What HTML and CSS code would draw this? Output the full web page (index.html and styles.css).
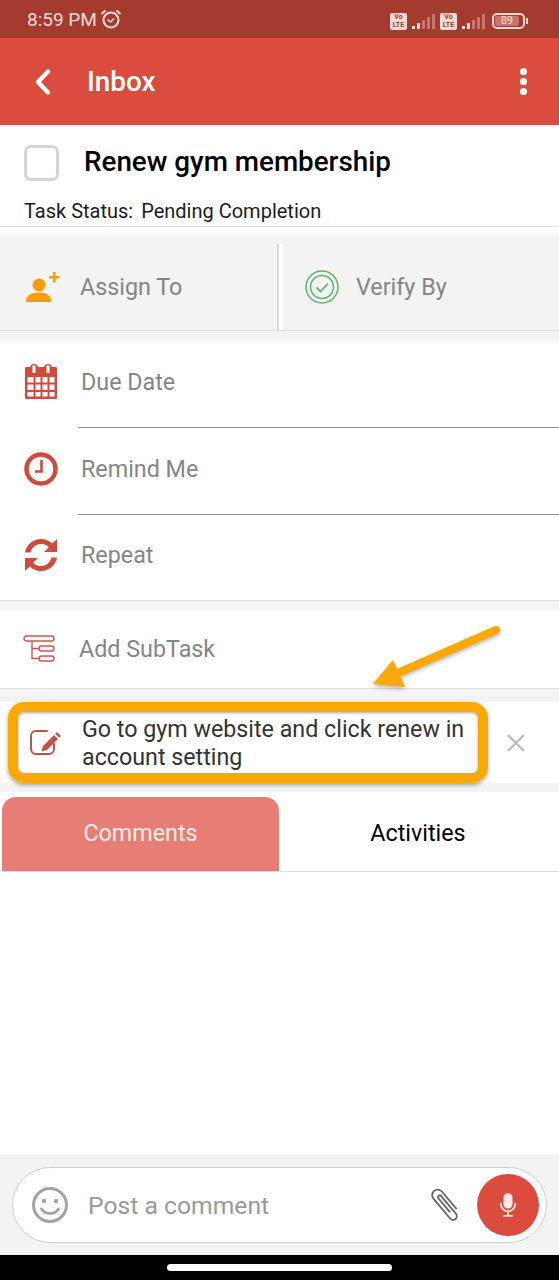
FILE: index.html
```html
<!DOCTYPE html>
<html lang="en">
<head>
  <meta charset="UTF-8" />
  <meta name="viewport" content="width=device-width, initial-scale=1.0"/>
  <title>Inbox - Renew gym membership</title>
  <link rel="stylesheet" href="styles.css">
</head>
<body>

<div class="status-bar">
  <div class="status-left">
    <span class="clock">8:59 PM</span>
    <svg class="alarm" width="22" height="20" viewBox="0 0 22 20" fill="none" stroke="#f6dcd6" stroke-width="2">
      <circle cx="11" cy="11" r="7.5"/>
      <path d="M7.5 10.5l3 2.5 3.5-3.5" stroke-width="1.6"/>
      <path d="M1.5 5L5.5 1.5M20.5 5L16.5 1.5"/>
    </svg>
  </div>
  <div class="status-right">
    <span class="volte">Vo<br>LTE</span>
    <span class="signal"><i class="on s1"></i><i class="on s2"></i><i class="s3"></i><i class="s4"></i><i class="s5"></i></span>
    <span class="volte">Vo<br>LTE</span>
    <span class="signal"><i class="on s1"></i><i class="on s2"></i><i class="s3"></i><i class="s4"></i><i class="s5"></i></span>
    <span class="battery"><span class="battery-level">89</span></span>
    <span class="battery-tip"></span>
  </div>
</div>

<header class="app-bar">
  <svg class="back" width="20" height="28" viewBox="0 0 20 28" fill="none" stroke="#fff" stroke-width="4.4" stroke-linecap="round" stroke-linejoin="round">
    <path d="M15 3.5L5 14l10 10.5"/>
  </svg>
  <span class="app-title">Inbox</span>
  <span class="more"><i></i><i></i><i></i></span>
</header>

<section class="task-head">
  <div class="task-title-row">
    <span class="checkbox"></span>
    <h1>Renew gym membership</h1>
  </div>
  <p class="task-status"><span>Task Status:</span><span>Pending Completion</span></p>
</section>

<section class="assign-row">
  <div class="assign-cell first">
    <svg width="36" height="34" viewBox="0 0 36 34" fill="#fb9a0b">
      <circle cx="14" cy="15" r="6.5"/>
      <path d="M1 32c0-6 4-9.500 13-9.500S26 26 26 32z"/>
      <path d="M24 6h4V2h2.500v4h4v2.500h-4v4H28v-4h-4z"/>
    </svg>
    <span>Assign To</span>
  </div>
  <div class="assign-cell second">
    <svg width="34" height="34" viewBox="0 0 34 34" fill="none" stroke="#5db56c" stroke-width="1.500">
      <circle cx="17" cy="17" r="16"/>
      <circle cx="17" cy="17" r="11.500"/>
      <path d="M11.500 17.500l4 4 7.500-8" stroke-width="1.800"/>
    </svg>
    <span>Verify By</span>
  </div>
</section>

<section class="dates">
  <div class="date-row">
    <svg class="date-icon" width="36" height="36" viewBox="0 0 36 36">
      <path fill="#d04a3d" d="M3 3h30a1 1 0 0 1 1 1v30a1 1 0 0 1-1 1H3a1 1 0 0 1-1-1V4a1 1 0 0 1 1-1z"/>
      <path fill="#d04a3d" d="M7 6V4a4 4 0 0 1 8 0v2zM21 6V4a4 4 0 0 1 8 0v2z"/>
      <path fill="#fff" d="M9.500 1.500h3V9h-3zM23.500 1.500h3V9h-3z"/>
      <path fill="#fff" d="M4.500 13h6v5.500h-6zM12.500 13h5v5.500h-5zM19.500 13h5v5.500h-5zM26.500 13h5v5.500h-5zM4.500 20.500h6V26h-6zM12.500 20.500h5V26h-5zM19.500 20.500h5V26h-5zM26.500 20.500h5V26h-5zM4.500 28h6v4.500h-6zM12.500 28h5v4.500h-5zM19.500 28h5v4.500h-5zM26.500 28h5v4.500h-5z"/>
    </svg>
    <span>Due Date</span>
  </div>
  <div class="date-row">
    <svg class="date-icon" width="36" height="36" viewBox="0 0 36 36" fill="none" stroke="#d04a3d">
      <circle cx="18" cy="18" r="14.500" stroke-width="4.500"/>
      <path d="M18.500 9v11.500H12" stroke-width="2.600"/>
    </svg>
    <span>Remind Me</span>
  </div>
  <div class="date-row last">
    <svg class="date-icon" width="36" height="36" viewBox="0 0 36 36" fill="#d04a3d">
      <path d="M2 15.500C3.500 7.500 10 2 18 2c4.500 0 8.300 1.700 11.200 4.500L34 2v13H21l4.800-4.800C23.700 8.100 21 7 18 7c-5 0-9.200 3.500-10.400 8.500z"/>
      <path d="M34 20.500C32.500 28.500 26 34 18 34c-4.500 0-8.300-1.700-11.200-4.500L2 34V21h13l-4.800 4.800c2.100 2.100 4.800 3.200 7.800 3.200 5 0 9.200-3.500 10.400-8.500z"/>
    </svg>
    <span>Repeat</span>
  </div>
</section>

<section class="subtask">
  <svg width="34" height="28" viewBox="0 0 34 28" fill="none" stroke="#c9574c" stroke-width="1.400">
    <rect x="1" y="1" width="30" height="5" rx="2.500"/>
    <rect x="16" y="11" width="15" height="5" rx="2.500"/>
    <rect x="16" y="21" width="15" height="5" rx="2.500"/>
    <path d="M9 6v17.500h7M9 13.500h7"/>
  </svg>
  <span>Add SubTask</span>
</section>

<section class="note">
  <svg class="note-icon" width="34" height="30" viewBox="0 0 34 30" fill="none" stroke="#c0524a" stroke-width="2">
    <path d="M17 3H6a5 5 0 0 0-5 5v13a5 5 0 0 0 5 5h13a5 5 0 0 0 5-5v-5" stroke-linecap="round"/>
    <path fill="#c0524a" stroke="none" d="M27 4l4 4-1.800 1.800-4-4zM24 7l4 4-11 11-5.500 1.500L13 18z"/>
  </svg>
  <p class="note-text">Go to gym website and click renew in account setting</p>
  <svg class="note-close" width="20" height="20" viewBox="0 0 20 20" stroke="#bdbdbd" stroke-width="2.400">
    <path d="M2 2l16 16M18 2L2 18"/>
  </svg>
  <div class="note-highlight"></div>
</section>

<svg class="callout-arrow" width="134" height="68" viewBox="0 0 134 68">
  <path d="M124 8L26 51" stroke="#f9a806" stroke-width="8" stroke-linecap="round" fill="none"/>
  <path d="M1 62L21 38 33 65z" fill="#f9a806"/>
</svg>

<nav class="tabs">
  <div class="tab active">Comments</div>
  <div class="tab">Activities</div>
</nav>

<div class="comment-area"></div>

<footer class="composer-wrap">
  <div class="composer">
    <svg width="38" height="38" viewBox="0 0 38 38" fill="none" stroke="#a3a3a3" stroke-width="3">
      <circle cx="19" cy="19" r="16.500"/>
      <circle cx="13" cy="15" r="2.200" fill="#a3a3a3" stroke="none"/>
      <circle cx="25" cy="15" r="2.200" fill="#a3a3a3" stroke="none"/>
      <path d="M10.500 23c2 3 5 4.500 8.500 4.500s6.500-1.500 8.500-4.500" stroke-linecap="round"/>
    </svg>
    <span class="composer-hint">Post a comment</span>
    <svg class="clip" width="32" height="34" viewBox="-16 -17 32 34" fill="none" stroke="#666" stroke-width="1.800">
      <path transform="rotate(-40)" d="M-1.500 8V-10a1.750 1.750 0 0 1 3.500 0V13a3.750 3.750 0 0 1-7.500 0V-13a5.500 5.500 0 0 1 11 0V10"/>
    </svg>
    <span class="mic">
      <svg width="18" height="26" viewBox="0 0 20 28" fill="none" stroke="#fbe9e6" stroke-width="2">
        <rect x="5" y="1" width="10" height="17" rx="5" fill="#fbe9e6" stroke="none"/>
        <path d="M2 12v1a8 8 0 0 0 16 0v-1M10 21v4.500M4.500 26h11"/>
      </svg>
    </span>
  </div>
</footer>

<div class="nav-bar"><span class="home-pill"></span></div>

</body>
</html>
```

FILE: styles.css
```css
* {
  box-sizing: border-box;
}

body {
  margin: 0;
  width: 559px;
  height: 1280px;
  position: relative;
  overflow: hidden;
  font-family: Roboto, Arial, sans-serif;
  background: #f3f3f3;
}

.status-bar {
  height: 38px;
  background: #a53a2f;
  display: flex;
  justify-content: space-between;
  align-items: center;
  padding: 0 31px 0 27px;
  color: #f6dcd6;
}

.status-left {
  display: flex;
  align-items: center;
  gap: 3px;
}

.clock {
  font-size: 19px;
}

.status-right {
  display: flex;
  align-items: center;
  gap: 5px;
  padding-top: 4px;
}

.volte {
  width: 17px;
  height: 17px;
  border-radius: 2px;
  background: #f2d8d2;
  color: #a53a2f;
  font-size: 7px;
  font-weight: 700;
  line-height: 8px;
  text-align: center;
}

.signal {
  display: flex;
  align-items: flex-end;
  gap: 2px;
  height: 16px;
}

.signal i {
  width: 3px;
  background: #c9776c;
}

.signal .on {
  background: #f6dcd6;
}

.s1 { height: 3px; }
.s2 { height: 6px; }
.s3 { height: 9px; }
.s4 { height: 12px; }
.s5 { height: 15px; }

.battery {
  width: 33px;
  height: 16px;
  margin-left: 2px;
  border: 2px solid #f2d8d2;
  border-radius: 5px;
  padding: 1px;
  display: flex;
}

.battery-level {
  width: 88%;
  background: #c9776c;
  border-radius: 2px;
  font-size: 11px;
  line-height: 10px;
  text-align: center;
  color: #f6dcd6;
}

.battery-tip {
  width: 2px;
  height: 6px;
  margin-left: -4px;
  background: #f2d8d2;
}

.app-bar {
  height: 87px;
  background: #db4b3e;
  display: flex;
  align-items: center;
  padding: 0 32px 0 33px;
  color: #fff;
}

.app-title {
  margin-left: 34px;
  font-size: 27.800px;
  font-weight: 500;
}

.more {
  margin-left: auto;
  display: flex;
  flex-direction: column;
  gap: 3px;
}

.more i {
  width: 7px;
  height: 7px;
  border-radius: 50%;
  background: #fff;
}

.task-head {
  height: 102px;
  background: #fff;
  border-bottom: 1px solid #ddd;
  padding: 20px 0 0 24px;
}

.task-title-row {
  display: flex;
  align-items: center;
  height: 36px;
}

.checkbox {
  width: 35px;
  height: 36px;
  border: 3px solid #d4d4d4;
  border-radius: 7px;
}

.task-title-row h1 {
  margin: -3px 0 0 25px;
  font-size: 27.800px;
  font-weight: 500;
  color: #000;
}

.task-status {
  margin: 18px 0 0;
  font-size: 20px;
  color: #1c1c1c;
  display: flex;
  gap: 8px;
}

.assign-row {
  height: 104px;
  border-top: 8px solid #fff;
  background: #f3f3f3;
  border-bottom: 1px solid #ddd;
  display: flex;
}

.assign-cell {
  display: flex;
  align-items: center;
  font-size: 23.300px;
  color: #858585;
}

.assign-cell.first {
  width: 283px;
  padding: 0 0 0 25px;
  gap: 19px;
  margin-top: 9px;
  border-right: 4px solid #fff;
  box-shadow: inset -2px 0 0 #d9d9d9;
}

.assign-cell.second {
  padding-left: 22px;
  gap: 17px;
  padding-top: 9px;
}

.dates {
  margin-top: 10px;
  background: #fff;
  border-bottom: 1px solid #ddd;
}

.date-row {
  position: relative;
  height: 87px;
  display: flex;
  align-items: center;
  padding: 0 0 5px 23px;
  font-size: 23.300px;
  color: #858585;
}

.date-row::after {
  content: "";
  position: absolute;
  left: 78px;
  right: 0;
  bottom: 0;
  height: 1px;
  background: #909090;
}

.date-row.last {
  height: 85px;
}

.date-row.last::after {
  display: none;
}

.date-icon {
  width: 36px;
  margin-right: 22px;
}

.subtask {
  margin-top: 9px;
  height: 79px;
  background: #fff;
  border-bottom: 1px solid #ddd;
  display: flex;
  align-items: center;
  padding-left: 23px;
  gap: 22px;
  font-size: 23.300px;
  color: #858585;
}

.note {
  position: relative;
  margin-top: 13px;
  height: 81px;
  background: #fff;
  display: flex;
  align-items: center;
  padding-left: 30px;
}

.note-icon {
  flex: none;
}

.note-text {
  margin: 0 0 0 18px;
  width: 395px;
  font-size: 23.250px;
  line-height: 28px;
  color: #333;
}

.note-close {
  margin-left: 29px;
  flex: none;
}

/* orange annotation drawn on the screenshot */
.note-highlight {
  position: absolute;
  left: 8px;
  top: 0;
  width: 480px;
  height: 81px;
  border: 10px solid #f9a806;
  border-radius: 16px;
  box-shadow: 0 2px 4px rgba(0,0,0,0.35), inset 0 1px 3px rgba(0,0,0,0.35);
}

.callout-arrow {
  position: absolute;
  left: 372px;
  top: 622px;
  filter: drop-shadow(0 2px 2px rgba(0,0,0,0.3));
}

.tabs {
  margin-top: 9px;
  height: 80px;
  padding-top: 5px;
  background: #fff;
  border-bottom: 1px solid #ddd;
  display: flex;
}

.tab {
  width: 278px;
  height: 74px;
  padding-bottom: 2px;
  display: flex;
  align-items: center;
  justify-content: center;
  font-size: 23.300px;
  color: #000;
}

.tab.active {
  width: 277px;
  margin-left: 2px;
  background: #e77e75;
  color: #fbeeec;
  border-radius: 14px 14px 0 0;
}

.comment-area {
  height: 282px;
  background: #fff;
}

.composer-wrap {
  height: 101px;
  background: #f3f3f3;
  padding: 13px 12px 0;
}

.composer {
  height: 76px;
  background: #fff;
  border: 1px solid #ccc;
  border-radius: 38px;
  display: flex;
  align-items: center;
  padding: 0 7px 0 18px;
}

.composer-hint {
  margin-left: 19px;
  font-size: 24.700px;
  color: #999;
}

.clip {
  margin-left: auto;
  margin-right: 15px;
}

.mic {
  width: 62px;
  height: 62px;
  border-radius: 50%;
  background: #db4b3e;
  display: flex;
  align-items: center;
  justify-content: center;
}

.nav-bar {
  height: 25px;
  background: #000;
  display: flex;
  justify-content: center;
  padding-top: 9px;
}

.home-pill {
  width: 225px;
  height: 7px;
  border-radius: 4px;
  background: #fff;
}
```
